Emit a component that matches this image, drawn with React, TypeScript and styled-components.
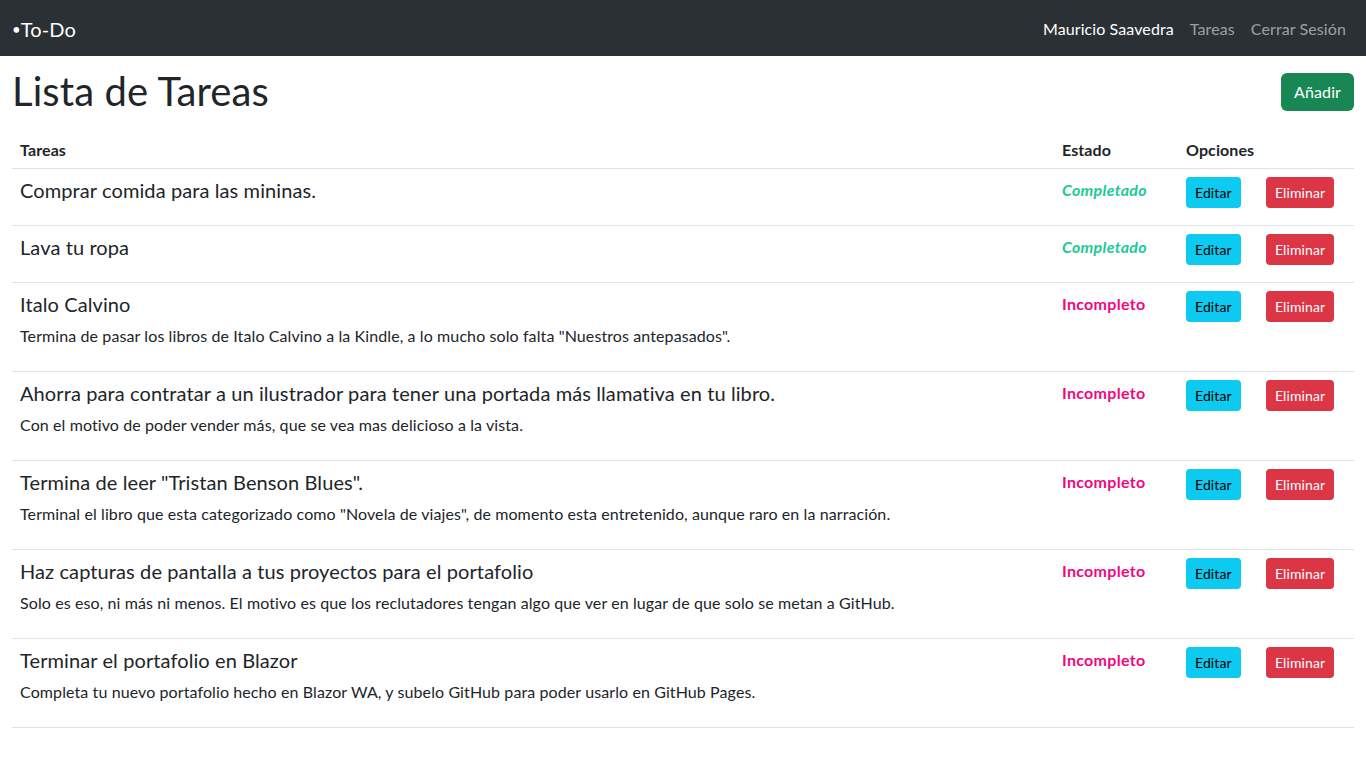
import React from "react";
import styled, { createGlobalStyle } from "styled-components";

const Global = createGlobalStyle`
  * { box-sizing: border-box; }
  body {
    margin: 0;
    font-family: Lato, "Noto Sans", sans-serif;
    font-size: 16px;
    line-height: 1.5;
    letter-spacing: 0.1px;
    color: #212529;
    background: #fff;
  }
`;

const Navbar = styled.nav`
  height: 56px;
  background: #2b3035;
  display: flex;
  align-items: center;
  justify-content: space-between;
  padding: 2px 12px 0;
`;

const Brand = styled.a`
  color: #fff;
  font-size: 20px;
  text-decoration: none;
`;

const Bullet = styled.span`
  font-size: 15px;
  position: relative;
  top: -2px;
`;

const NavLinks = styled.div`
  display: flex;
`;

const NavLink = styled.a<{ $active?: boolean }>`
  color: ${(p) => (p.$active ? "#fff" : "rgba(255,255,255,0.55)")};
  text-decoration: none;
  font-size: 16px;
  padding: 0 8px;
`;

const Container = styled.main`
  padding: 0 12px;
`;

const HeaderRow = styled.div`
  display: flex;
  align-items: center;
  justify-content: space-between;
  padding-top: 12px;
  margin-bottom: 12px;
`;

const Title = styled.h1`
  margin: 0;
  font-size: 40px;
  font-weight: 400;
  line-height: 46px;
  padding-bottom: 2px;
`;

const Button = styled.button<{ $variant: "success" | "info" | "danger"; $small?: boolean }>`
  font-family: inherit;
  letter-spacing: inherit;
  border: 1px solid transparent;
  cursor: pointer;
  font-size: ${(p) => (p.$small ? "14px" : "16px")};
  line-height: ${(p) => (p.$small ? "21px" : "24px")};
  padding: ${(p) => (p.$small ? "4px 8px" : "6px 12px")};
  border-radius: ${(p) => (p.$small ? "4px" : "6px")};
  background: ${(p) =>
    p.$variant === "success" ? "#198754" : p.$variant === "info" ? "#0dcaf0" : "#dc3545"};
  color: ${(p) => (p.$variant === "info" ? "#000" : "#fff")};
`;

const Table = styled.table`
  width: 100%;
  table-layout: fixed;
  border-collapse: collapse;
  margin-bottom: 16px;
`;

const Th = styled.th<{ $w?: number }>`
  text-align: left;
  font-weight: 700;
  padding: 10px 8px 6px;
  line-height: 24px;
  border-bottom: 1px solid #dee2e6;
  vertical-align: bottom;
  width: ${(p) => (p.$w ? `${p.$w}px` : "auto")};
`;

const Td = styled.td`
  padding: 9px 8px 7px;
  border-bottom: 1px solid #dee2e6;
  vertical-align: top;
  line-height: 24px;
`;

const ButtonCell = styled(Td)`
  padding: 8px;
`;

const TaskTitle = styled.h5`
  margin: 0 0 8px;
  font-size: 20px;
  font-weight: 400;
  line-height: 24px;
`;

const TaskDesc = styled.p`
  margin: 0 0 16px;
`;

const Status = styled.span<{ $done: boolean }>`
  font-weight: 700;
  font-style: ${(p) => (p.$done ? "italic" : "normal")};
  color: ${(p) => (p.$done ? "#20c997" : "#f0077f")};
  letter-spacing: 0.3px;
`;

type Task = { title: string; desc: string; done: boolean };

const tasks: Task[] = [
  { title: "Comprar comida para las mininas.", desc: "", done: true },
  { title: "Lava tu ropa", desc: "", done: true },
  {
    title: "Italo Calvino",
    desc: 'Termina de pasar los libros de Italo Calvino a la Kindle, a lo mucho solo falta "Nuestros antepasados".',
    done: false,
  },
  {
    title: "Ahorra para contratar a un ilustrador para tener una portada más llamativa en tu libro.",
    desc: "Con el motivo de poder vender más, que se vea mas delicioso a la vista.",
    done: false,
  },
  {
    title: 'Termina de leer "Tristan Benson Blues".',
    desc: 'Terminal el libro que esta categorizado como "Novela de viajes", de momento esta entretenido, aunque raro en la narración.',
    done: false,
  },
  {
    title: "Haz capturas de pantalla a tus proyectos para el portafolio",
    desc: "Solo es eso, ni más ni menos. El motivo es que los reclutadores tengan algo que ver en lugar de que solo se metan a GitHub.",
    done: false,
  },
  {
    title: "Terminar el portafolio en Blazor",
    desc: "Completa tu nuevo portafolio hecho en Blazor WA, y subelo GitHub para poder usarlo en GitHub Pages.",
    done: false,
  },
];

export default function App() {
  return (
    <>
      <Global />
      <Navbar>
        <Brand href="#">
          <Bullet>•</Bullet>To-Do
        </Brand>
        <NavLinks>
          <NavLink $active href="#">Mauricio Saavedra</NavLink>
          <NavLink href="#">Tareas</NavLink>
          <NavLink href="#">Cerrar Sesión</NavLink>
        </NavLinks>
      </Navbar>
      <Container>
        <HeaderRow>
          <Title>Lista de Tareas</Title>
          <Button $variant="success">Añadir</Button>
        </HeaderRow>
        <Table>
          <thead>
            <tr>
              <Th>Tareas</Th>
              <Th $w={124}>Estado</Th>
              <Th $w={80}>Opciones</Th>
              <Th $w={96}></Th>
            </tr>
          </thead>
          <tbody>
            {tasks.map((t, i) => (
              <tr key={i}>
                <Td>
                  <TaskTitle>{t.title}</TaskTitle>
                  <TaskDesc>{t.desc}</TaskDesc>
                </Td>
                <Td>
                  <Status $done={t.done}>{t.done ? "Completado" : "Incompleto"}</Status>
                </Td>
                <ButtonCell>
                  <Button $variant="info" $small>Editar</Button>
                </ButtonCell>
                <ButtonCell>
                  <Button $variant="danger" $small>Eliminar</Button>
                </ButtonCell>
              </tr>
            ))}
          </tbody>
        </Table>
      </Container>
    </>
  );
}
